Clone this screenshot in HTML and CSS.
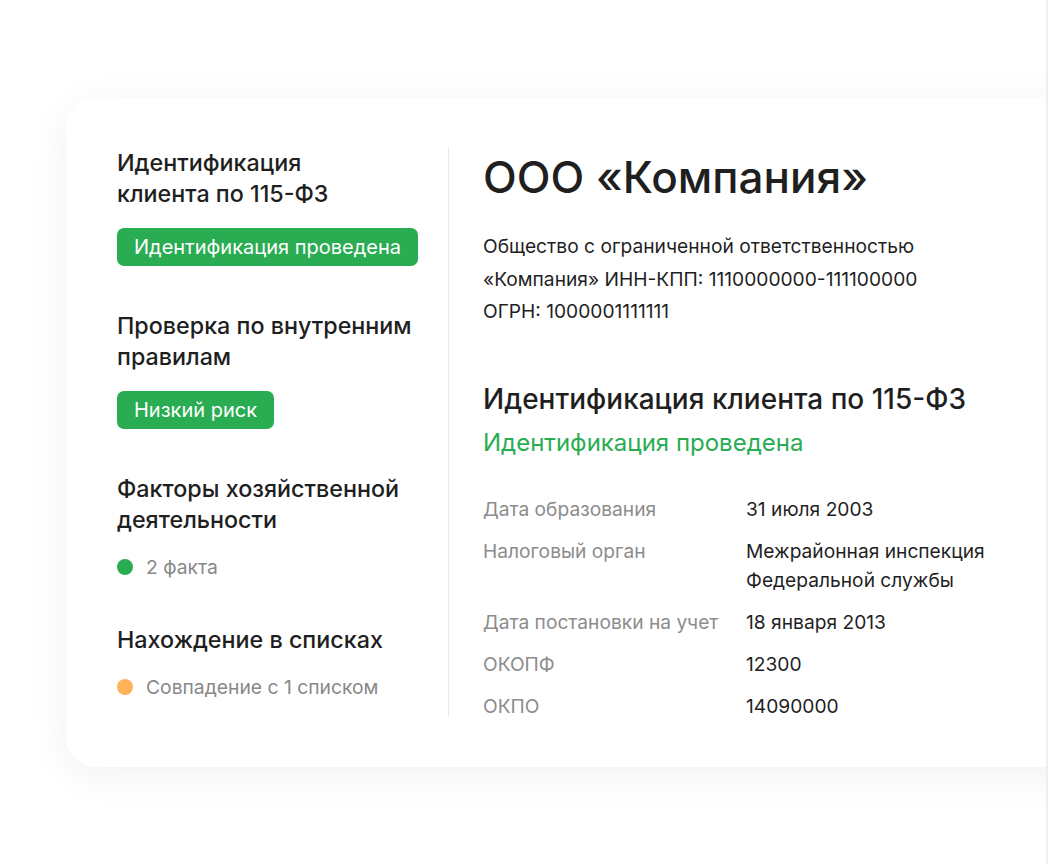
FILE: index.html
```html
<!DOCTYPE html>
<html lang="ru">
<head>
    <meta charset="UTF-8">
    <meta name="viewport" content="width=device-width, initial-scale=1.0">
    <title>ООО «Компания»</title>
    <link rel="stylesheet" href="styles.css">
</head>
<body>
    <div class="frame">
        <div class="card">
            <div class="checks">
                <div class="check">
                    <h3>Идентификация<br>клиента по 115-ФЗ</h3>
                    <span class="badge">Идентификация проведена</span>
                </div>
                <div class="check">
                    <h3>Проверка по внутренним<br>правилам</h3>
                    <span class="badge">Низкий риск</span>
                </div>
                <div class="check">
                    <h3>Факторы хозяйственной<br>деятельности</h3>
                    <p class="status"><span class="dot green"></span>2 факта</p>
                </div>
                <div class="check">
                    <h3>Нахождение в списках</h3>
                    <p class="status"><span class="dot orange"></span>Совпадение с 1 списком</p>
                </div>
            </div>

            <div class="details">
                <h1>ООО «Компания»</h1>
                <p class="company-info">
                    Общество с ограниченной ответственностью<br>
                    «Компания» ИНН-КПП: 1110000000-111100000<br>
                    ОГРН: 1000001111111
                </p>

                <h2>Идентификация клиента по 115-ФЗ</h2>
                <p class="result">Идентификация проведена</p>

                <dl class="facts">
                    <dt>Дата образования</dt>
                    <dd>31 июля 2003</dd>
                    <dt>Налоговый орган</dt>
                    <dd>Межрайонная инспекция<br>Федеральной службы</dd>
                    <dt>Дата постановки на учет</dt>
                    <dd>18 января 2013</dd>
                    <dt>ОКОПФ</dt>
                    <dd>12300</dd>
                    <dt>ОКПО</dt>
                    <dd>14090000</dd>
                </dl>
            </div>
        </div>
    </div>
</body>
</html>
```

FILE: styles.css
```css
html, body {
    margin: 0;
    padding: 0;
    background: #fff;
}

body {
    font-family: Inter, "Open Sans", sans-serif;
    color: #1f1f1f;
}

.frame {
    width: 1048px;
    height: 864px;
    box-sizing: border-box;
    border-right: 2px solid #efefef;
    overflow: hidden;
    padding-top: 97px;
    padding-left: 66px;
}

.card {
    display: flex;
    width: 1100px;
    height: 670px;
    box-sizing: border-box;
    padding: 50px 0 50px 51px;
    background: #fff;
    border-radius: 30px;
    box-shadow: 0 8px 40px rgba(0, 0, 0, 0.06);
}

.checks {
    width: 331px;
    display: flex;
    flex-direction: column;
    gap: 44px;
    border-right: 1px solid #e8e8e8;
}

.check h3 {
    margin: 0;
    font-size: 23.3px;
    font-weight: 500;
    line-height: 31px;
}

.badge {
    display: inline-block;
    margin-top: 19px;
    padding: 0 17px;
    height: 38px;
    line-height: 38px;
    background: #2aac52;
    color: #fff;
    font-size: 20px;
    border-radius: 7px;
}

.status {
    display: flex;
    align-items: center;
    margin: 19px 0 0;
    font-size: 19.3px;
    line-height: 26px;
    color: #888;
}

.dot {
    width: 16px;
    height: 16px;
    border-radius: 50%;
    margin-right: 13px;
}

.dot.green {
    background: #2aac52;
}

.dot.orange {
    background: #ffb25a;
}

.details {
    padding-left: 34px;
}

h1 {
    margin: 2px 0 0;
    font-size: 44px;
    font-weight: 500;
    line-height: 56px;
}

.company-info {
    margin: 25px 0 0;
    font-size: 19.2px;
    line-height: 32.5px;
}

h2 {
    margin: 54px 0 0;
    font-size: 28px;
    font-weight: 500;
    line-height: 34px;
}

.result {
    margin: 12px 0 0;
    font-size: 24px;
    line-height: 30px;
    color: #2aac52;
}

.facts {
    display: grid;
    grid-template-columns: 263px auto;
    row-gap: 13px;
    margin: 37px 0 0;
    font-size: 19.2px;
    line-height: 29px;
}

.facts dt {
    color: #8c8c8c;
}

.facts dd {
    margin: 0;
}
```
